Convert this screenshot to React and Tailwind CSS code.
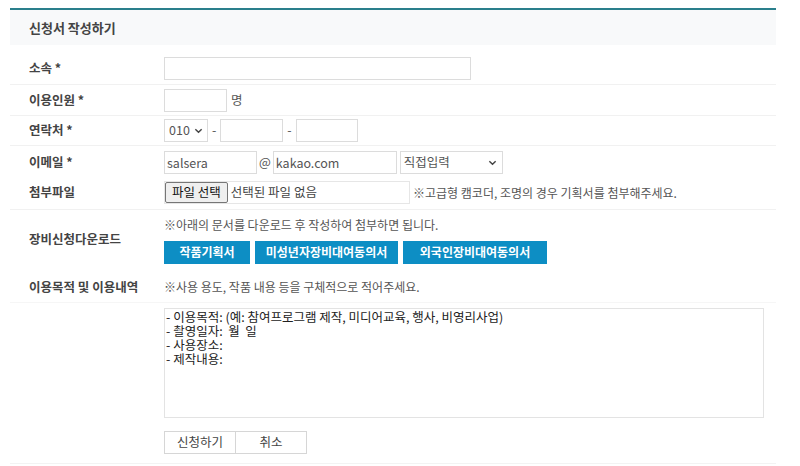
import React from 'react';

const Label = ({ children }) => (
  <div className="w-[154px] shrink-0 pl-[19px] text-[12.5px] font-bold text-[#444]">{children}</div>
);

const inputCls = 'h-[23px] border border-[#dcdcdc] bg-white px-[2px] text-[12.5px] text-[#555] outline-none';

const Chevron = () => (
  <svg width="9" height="9" viewBox="0 0 10 10" className="text-[#444]">
    <path d="M1.5 3.5 L5 7 L8.5 3.5" fill="none" stroke="currentColor" strokeWidth="1.6" />
  </svg>
);

const App = () => {
  return (
    <div className="w-[800px] h-[466px] bg-white pt-[8px] font-['Noto_Sans_CJK_KR','Noto_Sans',sans-serif] text-[#555]">
      <div className="ml-[10px] w-[766px]">
        <div className="border-t-2 border-[#2a7f8c]">
          <div className="flex h-[35px] items-center bg-[#f8f9fa] pl-[19px] text-[13px] font-bold text-[#444]">신청서 작성하기</div>
        </div>

        <div className="flex h-[40px] items-center border-b border-[#f1f1f1] pt-[7px]">
          <Label>소속 *</Label>
          <input className={`${inputCls} w-[307px]`} />
        </div>

        <div className="flex h-[31px] items-center border-b border-[#f1f1f1]">
          <Label>이용인원 *</Label>
          <input className={`${inputCls} w-[63px]`} />
          <span className="ml-[4px] text-[12.5px]">명</span>
        </div>

        <div className="flex h-[30px] items-center border-b border-[#f1f1f1]">
          <Label>연락처 *</Label>
          <div className="flex h-[23px] w-[44px] items-center justify-between border border-[#dcdcdc] px-[4px] text-[12.5px] text-[#555]">
            010 <Chevron />
          </div>
          <span className="mx-[4px] text-[12.5px]">-</span>
          <input className={`${inputCls} w-[63px]`} />
          <span className="mx-[4px] text-[12.5px]">-</span>
          <input className={`${inputCls} w-[62px]`} />
        </div>

        <div className="flex h-[30px] items-center pt-[2px]">
          <Label>이메일 *</Label>
          <input className={`${inputCls} w-[93px]`} defaultValue="salsera" />
          <span className="mx-[2px] text-[12.5px]">@</span>
          <input className={`${inputCls} w-[124px]`} defaultValue="kakao.com" />
          <div className="ml-[3px] flex h-[23px] w-[103px] items-center justify-between border border-[#dcdcdc] px-[3px] text-[12.5px] text-[#555]">
            직접입력 <span className="mr-[2px]"><Chevron /></span>
          </div>
        </div>

        <div className="flex h-[34px] items-center border-b border-[#f1f1f1]">
          <Label>첨부파일</Label>
          <div className="flex h-[23px] w-[246px] items-center border border-[#e6e6e6] text-[12.5px]">
            <div className="flex h-[21px] items-center rounded-[2px] border border-[#767676] bg-[#efefef] px-[6px] text-[#111]">파일 선택</div>
            <span className="ml-[3px] text-[#444]">선택된 파일 없음</span>
          </div>
          <span className="ml-[3px] text-[12px] text-[#555]">※고급형 캠코더, 조명의 경우 기획서를 첨부해주세요.</span>
        </div>

        <div className="flex h-[58px] items-center">
          <Label>장비신청다운로드</Label>
          <div className="flex flex-col pt-[1px]">
            <div className="text-[12px] leading-[18px]">※아래의 문서를 다운로드 후 작성하여 첨부하면 됩니다.</div>
            <div className="mt-[7px] flex gap-[5px] text-[12px] font-bold text-white">
              <div className="flex h-[23px] w-[86px] items-center justify-center bg-[#0d8ec4]">작품기획서</div>
              <div className="flex h-[23px] w-[143px] items-center justify-center bg-[#0d8ec4]">미성년자장비대여동의서</div>
              <div className="flex h-[23px] w-[144px] items-center justify-center bg-[#0d8ec4]">외국인장비대여동의서</div>
            </div>
          </div>
        </div>

        <div className="flex h-[35px] items-center border-b border-[#f6f6f6] pt-[4px]">
          <Label>이용목적 및 이용내역</Label>
          <span className="text-[12px]">※사용 용도, 작품 내용 등을 구체적으로 적어주세요.</span>
        </div>

        <div className="flex pt-[5px]">
          <div className="w-[154px] shrink-0" />
          <div className="h-[110px] w-[600px] whitespace-pre border border-[#e3e3e3] px-[1px] pt-[1px] text-[12.5px] leading-[14px] text-[#222]">
            {'- 이용목적: (예: 참여프로그램 제작, 미디어교육, 행사, 비영리사업)\n- 촬영일자:  월  일\n- 사용장소:\n- 제작내용:'}
          </div>
        </div>

        <div className="flex h-[46px] items-center border-b border-[#f3f3f3] pt-[3px]">
          <div className="w-[154px] shrink-0" />
          <div className="flex h-[23px] w-[72px] items-center justify-center border border-[#d6d6d6] text-[12.5px] text-[#444]">신청하기</div>
          <div className="flex h-[23px] w-[71px] items-center justify-center border border-l-0 border-[#d6d6d6] text-[12.5px] text-[#444]">취소</div>
        </div>
      </div>
    </div>
  );
};

export default App;
